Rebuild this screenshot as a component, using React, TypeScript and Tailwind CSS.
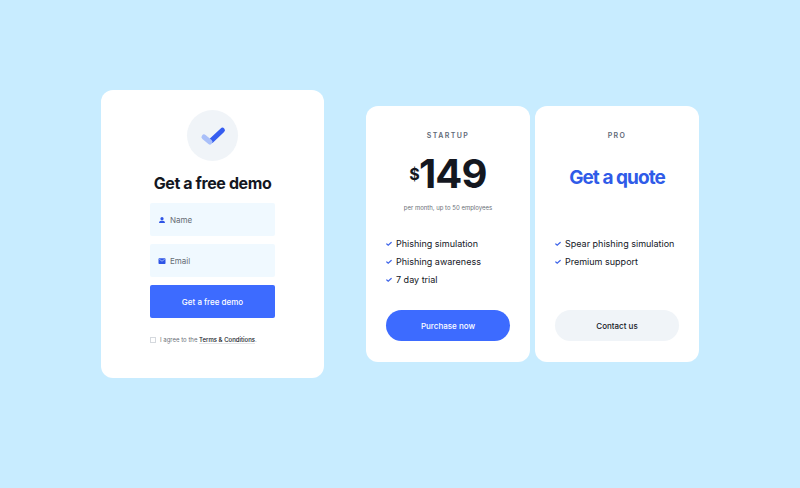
import type { InputHTMLAttributes, ReactNode } from 'react';

interface Plan {
  id: string;
  name: string;
  price?: string;
  note?: string;
  features: string[];
  action: string;
  primary: boolean;
}

const plans: Plan[] = [
  {
    id: 'startup',
    name: 'STARTUP',
    price: '149',
    note: 'per month, up to 50 employees',
    features: ['Phishing simulation', 'Phishing awareness', '7 day trial'],
    action: 'Purchase now',
    primary: true,
  },
  {
    id: 'pro',
    name: 'PRO',
    features: ['Spear phishing simulation', 'Premium support'],
    action: 'Contact us',
    primary: false,
  },
];

export default function App() {
  return (
    <main className="min-h-screen bg-[#c8ecff] flex items-center justify-center p-6 pb-11 font-['Inter',sans-serif] text-[#14171f]">
      <div className="w-full max-w-[598px] flex flex-col sm:flex-row items-center gap-[42px]">
        <DemoCard />
        <div className="w-full sm:flex-1 grid grid-cols-2 gap-[5px]">
          {plans.map(plan => (
            <PlanCard key={plan.id} plan={plan} />
          ))}
        </div>
      </div>
    </main>
  );
}

function DemoCard() {
  return (
    <section className="w-[223px] shrink-0 bg-white rounded-xl px-8 pt-5 pb-8 flex flex-col items-center">
      <div className="w-[51px] h-[51px] rounded-full bg-[#f0f4f8] flex items-center justify-center">
        <svg viewBox="0 0 26 20" className="w-[26px] h-5" fill="none" strokeWidth="5" strokeLinecap="round" aria-hidden="true">
          <path d="M11.6 14.4L22.4 4.2" stroke="#365df0" />
          <path d="M4 11L10 16" stroke="#a9bff9" />
        </svg>
      </div>
      <h2 className="mt-2.5 text-base leading-6 font-bold tracking-tight whitespace-nowrap">Get a free demo</h2>

      <form className="w-[125px] mt-2" onSubmit={e => e.preventDefault()}>
        <div className="space-y-2">
          <Field id="name" type="text" placeholder="Name" icon={<UserIcon />} />
          <Field id="email" type="email" placeholder="Email" icon={<MailIcon />} />
          <button type="submit" className="block w-full h-[33px] rounded-xs bg-[#3d6bff] text-white text-[8px] font-medium">
            Get a free demo
          </button>
        </div>
        <div className="mt-4 flex items-center gap-1 text-[6px] leading-3 text-[#6b7078] whitespace-nowrap">
          <input id="terms" type="checkbox" className="appearance-none w-1.5 h-1.5 border border-[#d5d9de] bg-white checked:bg-[#3d6bff]" />
          <label htmlFor="terms">
            I agree to the <a href="#terms" className="text-[#14171f] font-medium border-b border-[#e3e5e8]">Terms &amp; Conditions</a>.
          </label>
        </div>
      </form>
    </section>
  );
}

function Field({ id, icon, placeholder, ...rest }: { id: string; icon: ReactNode } & InputHTMLAttributes<HTMLInputElement>) {
  return (
    <div className="h-[33px] bg-[#f0f9ff] rounded-xs px-2 flex items-center gap-1">
      <label htmlFor={id} aria-label={placeholder} className="shrink-0">{icon}</label>
      <input id={id} placeholder={placeholder} className="min-w-0 flex-1 bg-transparent text-[8px] outline-none placeholder:text-[#666c74]" {...rest} />
    </div>
  );
}

function PlanCard({ plan }: { plan: Plan }) {
  return (
    <section className="bg-white rounded-xl px-5 pt-6 pb-[21px] flex flex-col">
      <h3 className="text-center text-[7px] leading-3 font-semibold tracking-[0.2em] text-[#5f6977]">{plan.name}</h3>

      <div className="h-14 flex items-center justify-center mt-1">
        {plan.price ? (
          <p className="flex items-center font-bold whitespace-nowrap tracking-tighter">
            <span className="text-base">$</span>
            <span className="text-[40px] leading-none">{plan.price}</span>
          </p>
        ) : (
          <p className="pt-2 text-[19px] font-bold tracking-tighter text-[#2f5be8] whitespace-nowrap">Get a quote</p>
        )}
      </div>

      <p className="h-3 text-center text-[6px] leading-3 text-[#6b7078] whitespace-nowrap">{plan.note}</p>

      <ul className="mt-6 h-15 space-y-1.5">
        {plan.features.map(feature => (
          <li key={feature} className="flex items-center gap-1 text-[9px] leading-3 whitespace-nowrap">
            <TickIcon />
            {feature}
          </li>
        ))}
      </ul>

      <button
        type="button"
        className={`mt-3 w-full h-[31px] rounded-full text-[8px] font-medium ${plan.primary ? 'bg-[#3d6bff] text-white' : 'bg-[#f0f4f8] text-[#14171f]'}`}
      >
        {plan.action}
      </button>
    </section>
  );
}

function UserIcon() {
  return (
    <svg viewBox="0 0 8 8" className="w-2 h-2" fill="#2f55e6" aria-hidden="true">
      <circle cx="4" cy="2.7" r="1.6" />
      <path d="M1.1 6.9V6.3C1.1 5.2 3 4.8 4 4.8S6.9 5.2 6.9 6.3V6.9Z" />
    </svg>
  );
}

function MailIcon() {
  return (
    <svg viewBox="0 0 8 8" className="w-2 h-2" aria-hidden="true">
      <rect x="0.5" y="1.2" width="7" height="5.8" rx="0.7" fill="#2f55e6" />
      <path d="M1.3 2.3L4 4.2L6.7 2.3" fill="none" stroke="#c9d8ff" strokeWidth="0.7" />
    </svg>
  );
}

function TickIcon() {
  return (
    <svg viewBox="0 0 6 6" className="w-1.5 h-1.5 shrink-0" fill="none" strokeWidth="1.2" strokeLinecap="round" aria-hidden="true">
      <path d="M0.8 3L2.2 4.2L5.2 1.5" stroke="#3d63e8" />
    </svg>
  );
}
